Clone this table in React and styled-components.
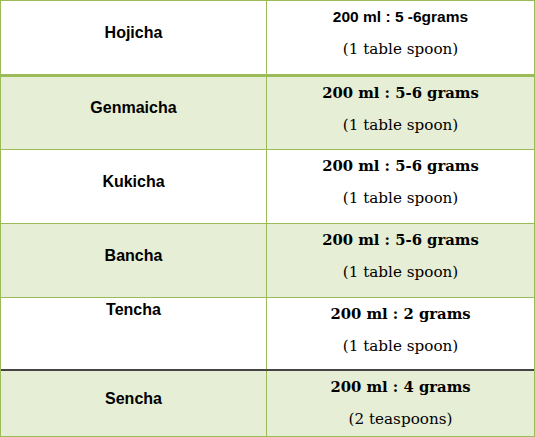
import React from "react";
import styled, { createGlobalStyle } from "styled-components";

const GREEN = "#9bbb59";
const SHADE = "#e6eed5";

// brewing amounts per tea, in the order of the table
const teas = [
  { name: "Hojicha", amount: "200 ml : 5 -6grams", measure: "(1 table spoon)", height: 73, border: `3px solid ${GREEN}`, sans: true },
  { name: "Genmaicha", amount: "200 ml : 5-6 grams", measure: "(1 table spoon)", height: 72, shaded: true },
  { name: "Kukicha", amount: "200 ml : 5-6 grams", measure: "(1 table spoon)", height: 73 },
  { name: "Bancha", amount: "200 ml : 5-6 grams", measure: "(1 table spoon)", height: 73, shaded: true },
  { name: "Tencha", amount: "200 ml : 2 grams", measure: "(1 table spoon)", height: 71, border: "2px solid #454545", top: true },
  { name: "Sencha", amount: "200 ml : 4 grams", measure: "(2 teaspoons)", height: 65, shaded: true, border: "none" },
];

export default function App() {
  return (
    <>
      <GlobalStyle />
      <Table>
        {teas.map((tea) => (
          <Row
            key={tea.name}
            $height={tea.height}
            $shaded={tea.shaded}
            $border={tea.border}
          >
            <NameCell $top={tea.top}>{tea.name}</NameCell>
            <AmountCell>
              <Amount $sans={tea.sans}>{tea.amount}</Amount>
              <Measure>{tea.measure}</Measure>
            </AmountCell>
          </Row>
        ))}
      </Table>
    </>
  );
}

const GlobalStyle = createGlobalStyle`
  body {
    margin: 0;
    background: #fff;
  }
`;

const Table = styled.div`
  width: 535px;
  height: 437px;
  box-sizing: border-box;
  border: 1px solid ${GREEN};
  display: flex;
  flex-direction: column;
  color: #000;
`;

const Row = styled.div`
  display: grid;
  grid-template-columns: 266px 1fr;
  height: ${(p) => p.$height}px;
  flex: none;
  box-sizing: content-box;
  background: ${(p) => (p.$shaded ? SHADE : "#fff")};
  border-bottom: ${(p) => p.$border || `1px solid ${GREEN}`};
`;

const NameCell = styled.div`
  display: flex;
  justify-content: center;
  align-items: ${(p) => (p.$top ? "flex-start" : "center")};
  padding: ${(p) => (p.$top ? "3px 0 0" : "0 0 10px")};
  border-right: 1px solid ${GREEN};
  font-family: "Liberation Sans", Arial, sans-serif;
  font-weight: bold;
  font-size: 16px;
  line-height: 18px;
  box-sizing: border-box;
`;

const AmountCell = styled.div`
  display: flex;
  flex-direction: column;
  align-items: center;
  padding-top: 0;
  line-height: 31px;
`;

const Amount = styled.div`
  font-weight: bold;
  font-family: ${(p) =>
    p.$sans
      ? `"Liberation Sans", Arial, sans-serif`
      : `"DejaVu Serif", "Liberation Serif", serif`};
  font-size: ${(p) => (p.$sans ? "15.5px" : "14.8px")};
`;

const Measure = styled.div`
  margin-top: 2px;
  font-family: "DejaVu Serif", "Liberation Serif", serif;
  font-size: 15.2px;
`;
